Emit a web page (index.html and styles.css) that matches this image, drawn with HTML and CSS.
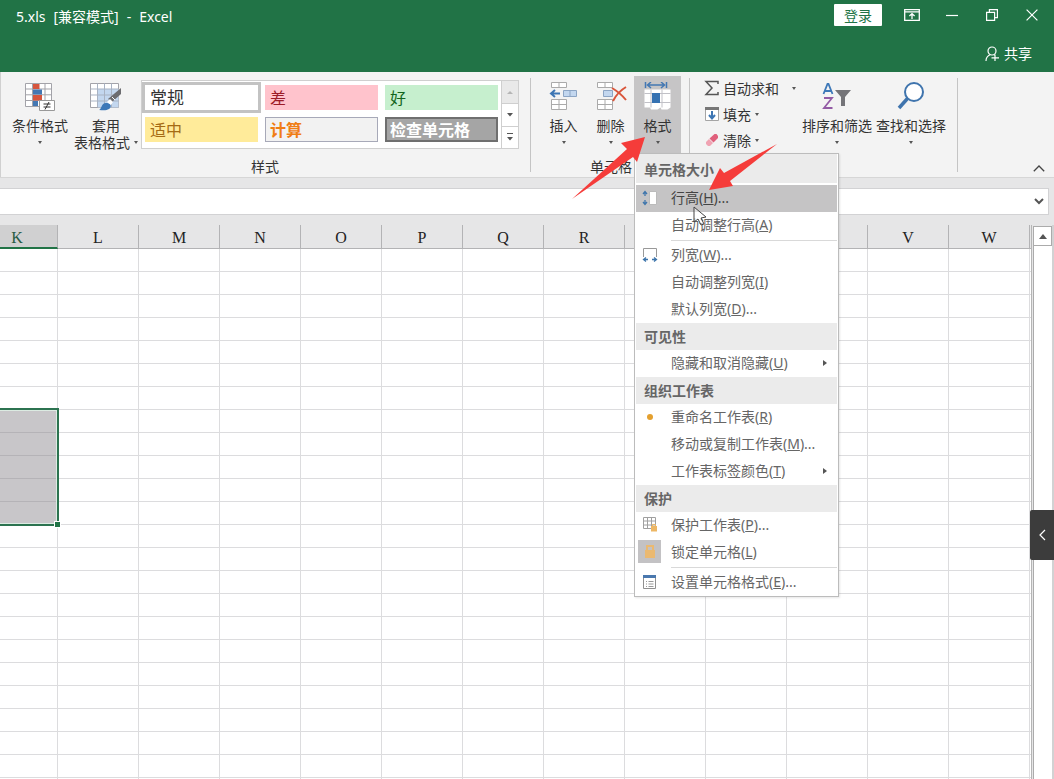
FILE: index.html
```html
<!DOCTYPE html>
<html lang="zh-CN">
<head>
<meta charset="utf-8">
<title>5.xls [兼容模式] - Excel</title>
<link rel="stylesheet" href="styles.css">
</head>
<body>
<header class="titlebar">
  <div class="title-row">
    <div class="doc-title"><span>5.xls</span><span>[兼容模式]</span><span>-</span><span>Excel</span></div>
    <button class="login">登录</button>
    <button class="win-btn" aria-label="功能区显示选项"><svg width="16" height="12" viewBox="0 0 16 12"><path d="M.7.7h14.6v10.6H.7zM1 2.8h14M8 10V4.8M5.4 7 8 4.6 10.600 7" fill="none" stroke="#fff" stroke-width="1.300"/></svg></button>
    <button class="win-btn" aria-label="最小化"><svg width="12" height="12" viewBox="0 0 12 12"><path d="M0 6.500h12" stroke="#fff" stroke-width="1.200"/></svg></button>
    <button class="win-btn" aria-label="还原"><svg width="12" height="12" viewBox="0 0 12 12"><path d="M.6 3.400h8v8h-8zM3.400 3V.6h8v8H9" fill="none" stroke="#fff" stroke-width="1.200"/></svg></button>
    <button class="win-btn" aria-label="关闭"><svg width="12" height="12" viewBox="0 0 12 12"><path d="M.6.6l10.800 10.800M11.400.6.6 11.400" stroke="#fff" stroke-width="1.200"/></svg></button>
  </div>
  <div class="share-row">
    <button class="share"><svg width="15" height="16" viewBox="0 0 15 16"><g fill="none" stroke="#fff" stroke-width="1.200"><circle cx="7" cy="5" r="4"/><path d="M1 15c0-3.500 1.500-5 4-6.200M9 8.800l1.500 1M10 8.500v6.500M6.500 11.800H14"/></g></svg>共享</button>
  </div>
</header>

<section class="ribbon" aria-label="开始">
  <div class="group group-styles">
    <div class="group-body">
      <button class="big cond">
        <svg width="30" height="29" viewBox="0 0 30 29"><path d="M.5 1.500h26v23H.5zM.5 7h26M.5 12.800h26M.5 18.500h26M7.500 1.500v23M20 1.500v23" fill="#fff" stroke="#a3a3a9"/><path fill="#d6553d" d="M8 2h6.500v5H8zM8 13h9v5.500H8z"/><path fill="#4478b3" d="M8 7.500h9v5H8zM8 19h5v5H8z"/><path fill="#fff" stroke="#999" d="M14.500 18.500h15v10h-15z"/><path d="M18.500 22h7M18.500 25h7M24 20l-4 7.500" stroke="#333" fill="none"/></svg>
        <span>条件格式</span><i class="caret"></i>
      </button>
      <button class="big table-fmt">
        <svg width="32" height="29" viewBox="0 0 32 29"><path d="M.5 1.500h28v24H.5z" fill="#fff" stroke="#a3a3a9"/><path fill="#c3d7ef" d="M8 7h20.500v18.500H8z"/><path d="M.5 7h28M.5 13h28M.5 19h28M7.500 1.500v24M14.500 1.500v24M21.500 1.500v24" stroke="#a9b3c3" fill="none"/><path d="M31 6v6L22 20l-4-3z" fill="#6c6c70"/><path d="M22 15l3 3" stroke="#fff"/><path d="M9 28c3-1 2-8 8-7 4 0 5 4 2 6-3 2-7 1-10 1z" fill="#3d78b8"/><path d="m17 20 3-3 3 3-2 3z" fill="#fff"/></svg>
        <span>套用</span><span class="with-caret">表格格式 <i class="caret"></i></span>
      </button>
      <div class="gallery">
        <div class="swatches">
          <button class="swatch normal">常规</button>
          <button class="swatch bad">差</button>
          <button class="swatch good">好</button>
          <button class="swatch neutral">适中</button>
          <button class="swatch calc">计算</button>
          <button class="swatch check">检查单元格</button>
        </div>
        <div class="gallery-nav">
          <button class="off" aria-label="上一行"><svg width="6" height="4" viewBox="0 0 6 4"><path d="M0 4l3-3 3 3z" fill="#b5b5b5"/></svg></button>
          <button aria-label="下一行"><svg width="6" height="4" viewBox="0 0 6 4"><path d="M0 0h6L3 3.500z" fill="#555"/></svg></button>
          <button aria-label="其他"><svg width="8" height="8" viewBox="0 0 8 8"><path d="M1 0h6v1H1zM1 4h6L4 7.500z" fill="#555"/></svg></button>
        </div>
      </div>
    </div>
    <div class="group-label">样式</div>
  </div>

  <div class="group group-cells">
    <div class="group-body">
      <button class="big cell">
        <svg width="32" height="29" viewBox="0 0 32 29"><path d="M3.500.5h15v5h-15zM11 .5v5M3.500 17.500h15v10h-15zM11 17.500v10M3.500 22.500h15" fill="#fff" stroke="#aaa"/><path d="M15.500 8.500h13v6h-13zM22 8.500v6" fill="#c3d7ef" stroke="#8ca5c4"/><path d="M12 11.500H3M7 8l-4 3.500L7 15" stroke="#3d76b4" stroke-width="2" fill="none"/></svg>
        <span>插入</span><i class="caret"></i>
      </button>
      <button class="big cell">
        <svg width="32" height="29" viewBox="0 0 32 29"><path d="M2.500.5h15v5h-15zM10 .5v5M2.500 17.500h15v10h-15zM10 17.500v10M2.500 22.500h15" fill="#fff" stroke="#aaa"/><path d="M8.500 8.500h9v6h-9z" fill="#c3d7ef" stroke="#8ca5c4"/><path d="M17 6c5 3 10 7 14 12M31 5c-5 3-10 8-13 14" stroke="#d9553a" stroke-width="2" fill="none"/></svg>
        <span>删除</span><i class="caret"></i>
      </button>
      <div class="dropdown">
        <button class="big cell open" aria-haspopup="menu" aria-expanded="true">
          <svg width="28" height="29" viewBox="0 0 28 29"><path d="M1.500 0v6M22.500 0v6M4 3h16M7 0 3.500 3 7 6M17 0l3.500 3L17 6" stroke="#4478b3" stroke-width="1.500" fill="none"/><path d="M.5 7.500h26v18l-3 2h-6l-1-2-3 2H7l-1-2H.5z" fill="#fff"/><path d="M.5 11.500h26M.5 20.500h26M7 7.500v18M18 7.500v18" stroke="#c1c1c7" fill="none"/><path d="M8 11h8v10H8z" fill="#3672b2"/></svg>
          <span>格式</span><i class="caret"></i>
        </button>
        <div class="menu" role="menu">
          <div class="menu-head first">单元格大小</div>
          <button class="item active" role="menuitem"><span class="icon"><svg width="16" height="16" viewBox="0 0 16 16"><path d="M7.500 1.500h7v13h-7z" fill="#fff" stroke="#bbb"/><path d="M3 2v4M1 4l2-2.500L5 4M3 10v4M1 12l2 2.500L5 12" fill="none" stroke="#3f76ac" stroke-width="1.300"/></svg></span><span>行高(<u>H</u>)...</span></button>
          <button class="item" role="menuitem"><span class="icon"></span><span>自动调整行高(<u>A</u>)</span></button>
          <hr>
          <button class="item" role="menuitem"><span class="icon"><svg width="16" height="16" viewBox="0 0 16 16"><path d="M1.500 10V1.500h13V10" fill="#fff" stroke="#999"/><path d="M2 12.500h4M4 10.500l-2.500 2 2.500 2M10 12.500h4M12 10.500l2.500 2-2.500 2" fill="none" stroke="#3f76ac" stroke-width="1.300"/></svg></span><span>列宽(<u>W</u>)...</span></button>
          <button class="item" role="menuitem"><span class="icon"></span><span>自动调整列宽(<u>I</u>)</span></button>
          <button class="item" role="menuitem"><span class="icon"></span><span>默认列宽(<u>D</u>)...</span></button>
          <div class="menu-head">可见性</div>
          <button class="item" role="menuitem"><span class="icon"></span><span>隐藏和取消隐藏(<u>U</u>)</span><i class="sub"></i></button>
          <div class="menu-head">组织工作表</div>
          <button class="item" role="menuitem"><span class="icon"><i class="dot"></i></span><span>重命名工作表(<u>R</u>)</span></button>
          <button class="item" role="menuitem"><span class="icon"></span><span>移动或复制工作表(<u>M</u>)...</span></button>
          <button class="item" role="menuitem"><span class="icon"></span><span>工作表标签颜色(<u>T</u>)</span><i class="sub"></i></button>
          <div class="menu-head">保护</div>
          <button class="item" role="menuitem"><span class="icon"><svg width="16" height="17" viewBox="0 0 16 17"><path d="M1.500 1.500h12v11h-12zM1.500 5h12M1.500 9h12M5.500 1.500v11M9.500 1.500v11" fill="#fff" stroke="#a0a0a0"/><path d="M9 10h6v5.500H9z" fill="#edb765"/><path d="M10.500 10V8.500h3V10" fill="none" stroke="#edb765"/></svg></span><span>保护工作表(<u>P</u>)...</span></button>
          <button class="item" role="menuitem"><span class="icon checked"><svg width="12" height="15" viewBox="0 0 12 15"><path d="M1 6h10v8H1z" fill="#eab971"/><path d="M3 6V2h6v4" fill="none" stroke="#eab971" stroke-width="2"/></svg></span><span>锁定单元格(<u>L</u>)</span></button>
          <hr>
          <button class="item" role="menuitem"><span class="icon"><svg width="14" height="14" viewBox="0 0 14 14"><path d="M.5.5h12v13H.5z" fill="#fff" stroke="#909090"/><path d="M0 0h13v3H0z" fill="#4a78ae"/><path d="M3 6.500h1M3 9h1M3 11.500h1M5.500 6.500h5M5.500 9h5M5.500 11.500h5" stroke="#999"/></svg></span><span>设置单元格格式(<u>E</u>)...</span></button>
        </div>
      </div>
    </div>
    <div class="group-label">单元格</div>
  </div>

  <div class="group group-edit">
    <div class="group-body">
      <div class="small-col">
        <button class="small wide"><svg width="16" height="16" viewBox="0 0 16 16"><path d="M14 4V1.500H2L8 8l-6 6.500h12V12" fill="none" stroke="#555" stroke-width="1.500"/></svg><span>自动求和</span><i class="caret"></i></button>
        <button class="small"><svg width="16" height="16" viewBox="0 0 16 16"><path d="M1.500 2.500h13v12h-13z" fill="#fff" stroke="#a5a5a5"/><path d="M1 1h14v3H1z" fill="#777"/><path d="M8 5v7M5 9l3 3.500L11 9" fill="none" stroke="#3d76b4" stroke-width="2"/></svg><span>填充</span><i class="caret"></i></button>
        <button class="small"><svg width="16" height="16" viewBox="0 0 16 16"><path d="m2 10 3-3 4 4-3 3H4l-2-2z" fill="#f0a3b2"/><path d="m5.500 6.500 5-4.500h2l1.500 2v2l-4.500 4.500z" fill="#e0607c"/></svg><span>清除</span><i class="caret"></i></button>
      </div>
      <button class="big find">
        <svg width="30" height="29" viewBox="0 0 30 29"><path d="M1.500 12 5.500 2h1l4 10M3 9h6" fill="none" stroke="#3d78b8" stroke-width="1.800"/><path d="M2 16h8L2 26h8.500" fill="none" stroke="#935ba5" stroke-width="1.800"/><path d="M13 8h16l-6 7v9h-4v-9z" fill="#747478"/></svg>
        <span>排序和筛选</span><i class="caret"></i>
      </button>
      <button class="big find">
        <svg width="28" height="29" viewBox="0 0 28 29"><circle cx="17" cy="10" r="9" fill="#fff" stroke="#3f74ad" stroke-width="2"/><path d="M10.500 16.500 2 26" stroke="#3f74ad" stroke-width="3.500"/></svg>
        <span>查找和选择</span><i class="caret"></i>
      </button>
    </div>
    <div class="group-label"></div>
  </div>
  <button class="collapse" aria-label="折叠功能区"><svg width="12" height="7" viewBox="0 0 12 7"><path d="M.8 6.200 6 1l5.200 5.200" fill="none" stroke="#444" stroke-width="1.300"/></svg></button>
</section>

<div class="formula-bar">
  <input type="text" aria-label="编辑栏">
  <button aria-label="展开编辑栏"><svg width="10" height="7" viewBox="0 0 10 7"><path d="M1 1l4 4 4-4" fill="none" stroke="#555" stroke-width="2"/></svg></button>
</div>

<main class="sheet">
  <div class="viewport">
    <table class="grid">
      <thead><tr><th class="current">K</th><th>L</th><th>M</th><th>N</th><th>O</th><th>P</th><th>Q</th><th>R</th><th></th><th></th><th></th><th>V</th><th>W</th><th></th></tr></thead>
      <tbody id="rows"></tbody>
    </table>
  </div>
  <div class="scrollbar"><button aria-label="向上滚动"><svg width="8" height="5" viewBox="0 0 8 5"><path d="M0 5l4-5 4 5z" fill="#555"/></svg></button><div class="track"></div></div>
  <button class="side-tab" aria-label="展开侧栏"><svg width="7" height="12" viewBox="0 0 7 12"><path d="M6 1 1 6l5 5" fill="none" stroke="#fff" stroke-width="1.200"/></svg></button>
</main>

<svg class="pointer-layer" width="220" height="100" viewBox="565 130 220 100" aria-hidden="true">
  <path fill="#f53c3a" d="M645 137 621 143l6 6L572 199 633 157l4 5zM709 190l11-22 4 5 53-29-47 37 3 5z"/>
  <path d="M694 207v15l4-3 3 6 3-1-3-6 5-1z" fill="#fff" fill-opacity=".5" stroke="#444"/>
</svg>
<script src="grid.js"></script>
</body>
</html>
```
FILE: styles.css
```css
* { box-sizing: border-box; }
html, body { height: 100%; }
body {
  margin: 0;
  display: flex;
  flex-direction: column;
  overflow: hidden;
  position: relative;
  background: #e6e6e7;
  color: #333;
  font: 14px/17px "Noto Sans", "Noto Sans CJK SC", sans-serif;
}
button { margin: 0; padding: 0; border: 0; background: none; font: inherit; color: inherit; }
svg { display: block; flex: none; }

.titlebar { flex: none; height: 72px; background: #217346; color: #fff; }
.title-row { display: flex; align-items: center; height: 30px; padding-right: 2px; }
.doc-title { display: flex; gap: 8px; flex: 1; padding: 2px 0 0 16px; }
.login { width: 48px; height: 22px; margin-right: 10px; background: #fff; color: #217346; border-radius: 1px; }
.win-btn { width: 40px; height: 30px; display: flex; align-items: center; justify-content: center; }
.share-row { display: flex; justify-content: flex-end; padding: 15px 22px 0 0; }
.share { display: flex; align-items: center; gap: 4px; }

.ribbon { flex: none; display: flex; height: 106px; background: #f3f3f3; border-bottom: 1px solid #d6d6d6; }
.group { position: relative; display: flex; flex-direction: column; padding-top: 4px; }
.group::after { content: ""; position: absolute; right: 0; top: 6px; bottom: 5px; width: 1px; background: #c4c4c4; }
.group-styles { width: 531px; padding-left: 6px; border-left: 1px solid #d0d0d0; }
.group-cells { width: 159px; padding-left: 9px; }
.group-edit { width: 268px; padding-left: 14px; }
.group-body { display: flex; height: 77px; }
.group-label { margin-top: 5px; padding-right: 8px; text-align: center; }

.big { display: flex; flex-direction: column; align-items: center; padding-top: 6px; white-space: nowrap; }
.big svg { margin-bottom: 6px; }
.big > .caret { margin-top: 7px; }
.caret { display: inline-block; flex: none; border: solid transparent; border-width: 3px 2px 0; border-top-color: #555; }
.cond { width: 66px; }
.table-fmt { width: 66px; }
.with-caret { display: flex; align-items: center; gap: 4px; }
.cell { width: 47px; height: 77px; }
.open { background: #c6c5c6; }
.find { width: 74px; }

.gallery { display: flex; height: 69px; margin: 4px 0 0 2px; background: #fff; border: 1px solid #cfcfcf; }
.swatches { display: grid; grid-template-columns: repeat(3, 113px); grid-auto-rows: 25px; gap: 7px; padding: 4px 3px; }
.swatch { padding: 0 4px; text-align: left; font-size: 16px; line-height: 22px; border: 1px solid transparent; }
.normal { background: #fff; font-size: 17px; box-shadow: 0 0 0 3px #c3c3c3; }
.bad { background: #ffc3cc; color: #9c1c28; }
.good { background: #c6efce; color: #13651c; }
.neutral { background: #ffeb9a; color: #a56b14; }
.calc { background: #f2f2f2; color: #f07d14; border-color: #a7a9b8; font-weight: 700; }
.check { background: #a5a5a5; color: #fff; border: 2px solid #6f6f6f; padding: 0 3px; line-height: 20px; font-weight: 700; }
.gallery-nav { display: grid; grid-template-rows: repeat(3, 1fr); width: 17px; border-left: 1px solid #cfcfcf; }
.gallery-nav button { display: flex; align-items: center; justify-content: center; }
.gallery-nav button + button { border-top: 1px solid #cfcfcf; }
.gallery-nav .off { background: #e9e9e9; }

.small-col { width: 92px; margin-right: 4px; }
.small { display: flex; align-items: center; gap: 3px; height: 26px; padding-bottom: 2px; white-space: nowrap; }
.small .caret { margin-left: 1px; }
.wide { width: 100%; }
.wide .caret { margin-left: auto; }
.collapse { display: flex; align-items: flex-end; margin-left: auto; padding: 0 9px 5px; }

.dropdown { position: relative; }
.menu {
  position: absolute; z-index: 5; top: 100%; left: 0; width: 205px;
  background: #fff; border: 1px solid #bcbcbc; box-shadow: 1px 1px 2px rgba(0, 0, 0, .1);
  color: #666; padding: 0 1px;
}
.menu-head { height: 27px; padding-left: 8px; line-height: 27px; font-weight: 700; background: #ebebeb; }
.first { height: 29px; margin-bottom: 2px; line-height: 31px; }
.item { display: flex; align-items: center; width: 100%; height: 27px; padding-bottom: 2px; text-align: left; white-space: nowrap; }
.active { background: #c5c4c5; color: #444; }
.icon { display: flex; align-items: center; justify-content: center; width: 23px; height: 23px; margin: 0 10px 0 2px; }
.checked { background: #c3c2c4; }
.dot { width: 6px; height: 6px; border-radius: 50%; background: #e4a02f; }
.sub { margin: 0 10px 0 auto; border: solid transparent; border-width: 3px 0 3px 4px; border-left-color: #555; }
.menu hr { height: 1px; margin: 1px 0 1px 35px; border: 0; background: #d9d9d9; }

.formula-bar { flex: none; display: flex; align-items: center; height: 27px; margin: 10px 5px 10px 0; background: #fff; border: 1px solid #d2d2d4; border-left: 0; }
.formula-bar input { flex: 1; min-width: 0; height: 100%; border: 0; background: none; outline: 0; }
.formula-bar button { padding: 0 4px; }

.sheet { position: relative; flex: 1; min-height: 0; display: flex; padding-right: 2px; background: #d2d2d3; }
.viewport { flex: 1; min-width: 0; overflow: hidden; background: #fff; border-right: 1px solid #b5b5b5; }
.grid { width: 1134px; margin-left: -23px; table-layout: fixed; border-spacing: 0; }
.grid th, .grid td { height: 23px; padding: 0; border: solid #dcdcde; border-width: 0 1px 1px 0; }
.grid th { height: 24px; padding-top: 3px; background: #e6e6e7; border-color: #b3b3b5; font: 16px/20px "Liberation Serif", serif; color: #222; }
.grid .current { background: #d0d0d1; color: #285c44; border-bottom: 2px solid #217346; line-height: 19px; }
.grid .selected { position: relative; background: #c8c6c9; border-color: #b5b3b7; }
.outline { position: absolute; z-index: 1; top: -2px; left: -2px; width: 84px; height: 118px; border: 2px solid #2c7350; box-shadow: inset 0 0 0 1px #dcebe2; }
.outline::after { content: ""; position: absolute; right: -3px; bottom: -3px; width: 5px; height: 5px; background: #217346; box-shadow: 0 0 0 1px #fff; }

.scrollbar { display: flex; flex-direction: column; width: 20px; padding: 1px 0 0 1px; background: #e6e6e7; }
.scrollbar button { display: flex; align-items: center; justify-content: center; height: 20px; background: #fff; border: 1px solid #ababab; }
.track { flex: 1; background: #fff; border-left: 1px solid #ababab; }
.side-tab { position: absolute; z-index: 2; right: 0; top: 285px; display: flex; align-items: center; justify-content: center; width: 24px; height: 50px; background: #3c3c3c; border-radius: 2px 0 0 2px; }

.pointer-layer { position: absolute; z-index: 10; left: 565px; top: 130px; pointer-events: none; }
```
FILE: grid.js
```js
// Builds the empty worksheet rows; five cells of the first column are selected.
const body = document.getElementById('rows');
for (let r = 0; r < 60; r++) {
  const row = body.insertRow();
  for (let c = 0; c < 14; c++) row.insertCell();
  if (r >= 7 && r < 12) row.cells[0].className = 'selected';
  if (r === 7) {
    const outline = document.createElement('div');
    outline.className = 'outline';
    row.cells[0].append(outline);
  }
}
```
